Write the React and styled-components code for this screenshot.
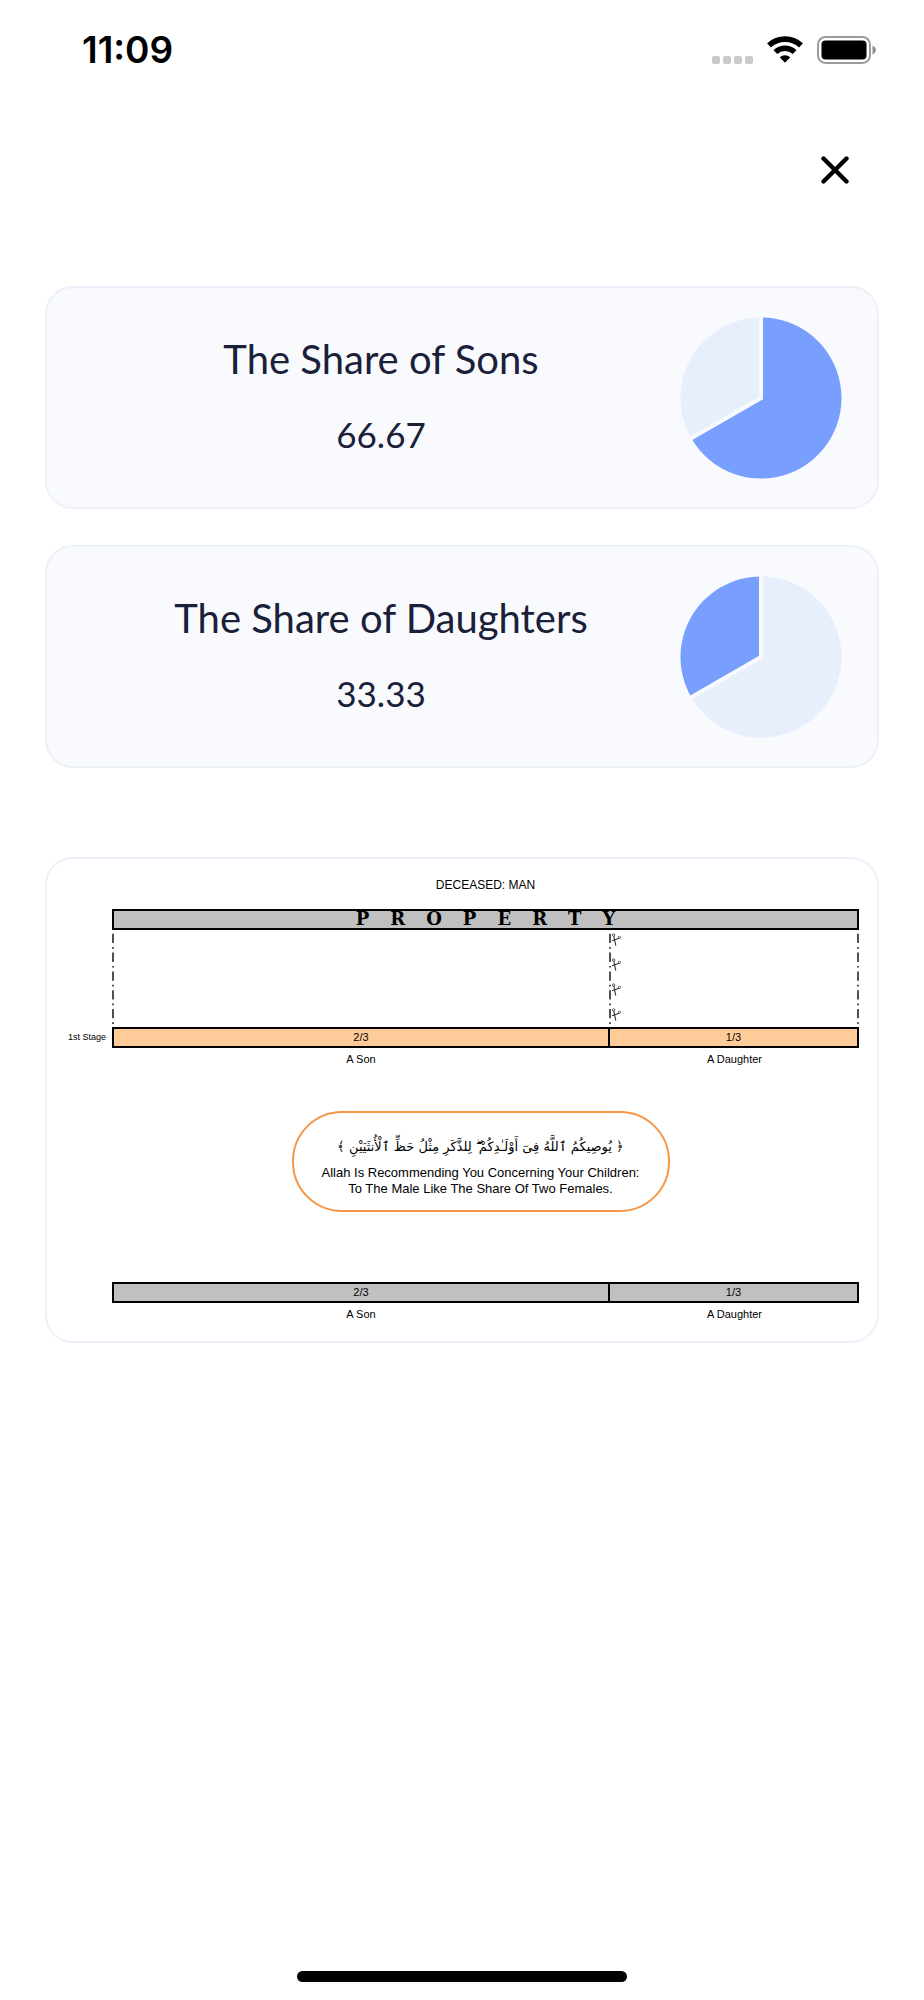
import React from 'react';
import styled, { createGlobalStyle } from 'styled-components';

const SHARES = [
  { title: 'The Share of Sons', value: 66.67, from: 0 },
  { title: 'The Share of Daughters', value: 33.33, from: 66.67 },
];

const HEIRS = [
  { name: 'A Son', fraction: '2/3', parts: 2 },
  { name: 'A Daughter', fraction: '1/3', parts: 1 },
];

const VERSE = '﴿ يُوصِيكُمُ ٱللَّهُ فِىٓ أَوْلَـٰدِكُمْ ۖ لِلذَّكَرِ مِثْلُ حَظِّ ٱلْأُنثَيَيْنِ ﴾';

const RADIUS = 80.5;

const point = (percent) => {
  const angle = (percent / 100) * Math.PI * 2;
  return `${81 + RADIUS * Math.sin(angle)} ${81 - RADIUS * Math.cos(angle)}`;
};

const slice = (from, to) => (
  `M81 81 L${point(from)} A${RADIUS} ${RADIUS} 0 ${to - from > 50 ? 1 : 0} 1 ${point(to)} Z`
);

const Pie = ({ value, from }) => {
  const active = slice(from, from + value);
  const rest = from === 0 ? slice(value, 100) : slice(0, from);
  return (
    <svg width="162" height="162" viewBox="0 0 162 162" aria-hidden="true">
      <path d={rest} fill="#e7eefc" />
      <path d={active} fill="#789ffd" />
      <path
        d={`M${point(0)} L81 81 L${point(66.67)}`}
        fill="none"
        stroke="#f8fafe"
        strokeWidth="4"
        strokeLinecap="square"
      />
    </svg>
  );
};

const Wifi = () => (
  <svg width="38" height="28" viewBox="0 0 38 28" aria-hidden="true">
    <path d="M3 9.4 A23.5 23.5 0 0 1 35 9.4" fill="none" stroke="#000" strokeWidth="5.6" />
    <path d="M9.4 16.1 A14 14 0 0 1 28.6 16.1" fill="none" stroke="#000" strokeWidth="5.4" />
    <path d="M13.8 21.3 A7.6 7.6 0 0 1 24.2 21.3 L19 26.8 Z" fill="#000" />
  </svg>
);

const Battery = () => (
  <svg width="60" height="28" viewBox="0 0 60 28" aria-hidden="true">
    <rect x="1" y="1" width="52" height="26" rx="7.5" fill="none" stroke="#9b9b9b" strokeWidth="2" />
    <rect x="4.5" y="4.5" width="45" height="19" rx="4" fill="#000" />
    <path d="M55.5 9.5 C60 11.5 60 16.5 55.5 18.5 Z" fill="#8e8e8e" />
  </svg>
);

const Cutters = () => (
  <svg width="10" height="14" viewBox="0 0 10 14" fill="none" stroke="#333" aria-hidden="true">
    <path d="M1 7.8 L8 5.2 M2.8 3 L4.8 12.6" strokeWidth="1.1" />
    <circle cx="8.4" cy="4.4" r="1.1" strokeWidth="0.8" />
    <circle cx="2.6" cy="2" r="1.2" strokeWidth="0.8" />
  </svg>
);

const CutLine = () => (
  <svg width="2" height="97" viewBox="0 0 2 97" aria-hidden="true">
    <path d="M1 -6 V97" stroke="#333" strokeWidth="1.7" strokeDasharray="9.3 4 1.7 3.8" strokeDashoffset="9" />
  </svg>
);

const ShareBar = ({ color }) => (
  <div>
    <Bar color={color}>
      {HEIRS.map(heir => (
        <Segment key={heir.name} parts={heir.parts}>{heir.fraction}</Segment>
      ))}
    </Bar>
    <Names>
      {HEIRS.map(heir => (
        <Name key={heir.name} parts={heir.parts}>{heir.name}</Name>
      ))}
    </Names>
  </div>
);

export default function App() {
  return (
    <Screen>
      <GlobalStyle />
      <StatusBar>
        <Time>11:09</Time>
        <Indicators>
          <Signal>
            <Dot />
            <Dot />
            <Dot />
            <Dot />
          </Signal>
          <Wifi />
          <Battery />
        </Indicators>
      </StatusBar>

      <Header>
        <CloseButton type="button" aria-label="Close">
          <svg width="28" height="28" viewBox="0 0 28 28" aria-hidden="true">
            <path d="M2.5 2.5 L25.5 25.5 M25.5 2.5 L2.5 25.5" stroke="#000" strokeWidth="4.4" strokeLinecap="round" />
          </svg>
        </CloseButton>
      </Header>

      <Content>
        {SHARES.map(share => (
          <ShareCard key={share.title}>
            <ShareText>
              <ShareTitle>{share.title}</ShareTitle>
              <ShareValue>{share.value}</ShareValue>
            </ShareText>
            <Pie value={share.value} from={share.from} />
          </ShareCard>
        ))}

        <DiagramCard>
          <Deceased>DECEASED: MAN</Deceased>
          <PropertyBar color="#c0c0c0">
            {'PROPERTY'.split('').map((letter, i) => (
              <span key={i}>{letter}</span>
            ))}
          </PropertyBar>
          <Division>
            <CutLine />
            <CutColumn>
              <CutMiddle>
                <CutLine />
                <CutMarks>
                  <Cutters />
                  <Cutters />
                  <Cutters />
                  <Cutters />
                </CutMarks>
              </CutMiddle>
              <CutLine />
            </CutColumn>
          </Division>
          <Stage>1st Stage</Stage>
          <ShareBar color="#ffcc99" />
          <VerseRow>
            <Verse>
              <Arabic lang="ar" dir="rtl">{VERSE}</Arabic>
              <Translation>
                Allah Is Recommending You Concerning Your Children:
                <br />
                To The Male Like The Share Of Two Females.
              </Translation>
            </Verse>
          </VerseRow>
          <ShareBar color="#c0c0c0" />
        </DiagramCard>
      </Content>

      <HomeIndicator />
    </Screen>
  );
}

const GlobalStyle = createGlobalStyle`
  * {
    box-sizing: border-box;
  }

  body {
    margin: 0;
    background: #fff;
  }

  svg {
    display: block;
    flex-shrink: 0;
  }
`;

const Screen = styled.div`
  display: flex;
  flex-direction: column;
  min-height: 100vh;
  color: #000;
  font-family: 'Liberation Sans', Arial, sans-serif;
`;

const StatusBar = styled.div`
  display: flex;
  justify-content: space-between;
  align-items: center;
  height: 100px;
  padding: 0 47px 0 82px;
`;

const Time = styled.div`
  font: 600 37px/44px Inter, sans-serif;
`;

const Indicators = styled.div`
  display: flex;
  align-items: flex-end;
  gap: 13px;
`;

const Signal = styled.div`
  display: flex;
  gap: 3px;
`;

const Dot = styled.span`
  width: 8px;
  height: 8px;
  border-radius: 2px;
  background: #cacaca;
`;

const Header = styled.header`
  display: flex;
  justify-content: flex-end;
  padding: 48px 67px 94px;
`;

const CloseButton = styled.button`
  padding: 8px;
  border: 0;
  background: none;
  cursor: pointer;
`;

const Content = styled.main`
  padding: 0 45px;
`;

const ShareCard = styled.section`
  display: flex;
  align-items: center;
  height: 223px;
  margin-bottom: 36px;
  padding: 0 35px;
  border: 2px solid #ecf0f8;
  border-radius: 28px;
  background: #f8fafe;
  color: #192038;
  font-family: Lato, sans-serif;
  text-align: center;
`;

const ShareText = styled.div`
  flex: 1;
  padding-bottom: 3px;
`;

const ShareTitle = styled.h2`
  margin: 0 0 27px;
  font-size: 40px;
  font-weight: 400;
  line-height: 48px;
`;

const ShareValue = styled.p`
  margin: 0;
  font-size: 35px;
  line-height: 48px;
`;

const DiagramCard = styled.section`
  display: grid;
  grid-template-columns: 59px 1fr;
  column-gap: 6px;
  margin-top: 89px;
  padding: 18px 18px 19px 0;
  border: 2px solid #ecf0f8;
  border-radius: 28px;

  > * {
    grid-column: 2;
  }
`;

const Deceased = styled.h3`
  margin: 0 0 16px;
  font-size: 12px;
  font-weight: 400;
  line-height: 16px;
  text-align: center;
`;

const Bar = styled.div`
  display: flex;
  height: 21px;
  border: 2px solid #000;
  background: ${props => props.color};
`;

const PropertyBar = styled(Bar)`
  justify-content: center;
  gap: 21px;
  font: 700 18px/16px 'DejaVu Serif', serif;
`;

const Division = styled.div`
  display: grid;
  grid-template-columns: 2fr 1fr;
  height: 97px;
`;

const CutColumn = styled.div`
  display: flex;
  justify-content: space-between;
`;

/* the line sits centred on the border between the two shares */
const CutMiddle = styled.div`
  display: flex;
  margin-left: -1px;
`;

const CutMarks = styled.div`
  display: flex;
  flex-direction: column;
  gap: 11px;
  padding-top: 3px;
`;

const Stage = styled.div`
  && {
    grid-column: 1;
  }

  font-size: 9px;
  line-height: 20px;
  text-align: right;
  white-space: nowrap;
`;

const Segment = styled.div`
  flex: ${props => props.parts} 1 0;
  font-size: 11px;
  line-height: 16px;
  text-align: center;

  & + & {
    border-left: 2px solid #000;
  }
`;

const Names = styled.div`
  display: flex;
`;

const Name = styled.div`
  flex: ${props => props.parts} 1 0;
  padding-top: 3px;
  font-size: 11px;
  line-height: 16px;
  text-align: center;
`;

const VerseRow = styled.div`
  display: flex;
  justify-content: center;
  padding: 44px 10px 70px 0;
`;

const Verse = styled.blockquote`
  width: 378px;
  height: 101px;
  margin: 0;
  padding-top: 16px;
  border: 2px solid #f79646;
  border-radius: 50px;
  text-align: center;
`;

const Arabic = styled.p`
  margin: 0;
  font: 13px/36px 'DejaVu Sans', sans-serif;
  white-space: nowrap;
`;

const Translation = styled.p`
  margin: 0;
  font-size: 13px;
  line-height: 16px;
`;

const HomeIndicator = styled.div`
  width: 330px;
  height: 11px;
  margin: auto auto 18px;
  border-radius: 6px;
  background: #000;
`;
